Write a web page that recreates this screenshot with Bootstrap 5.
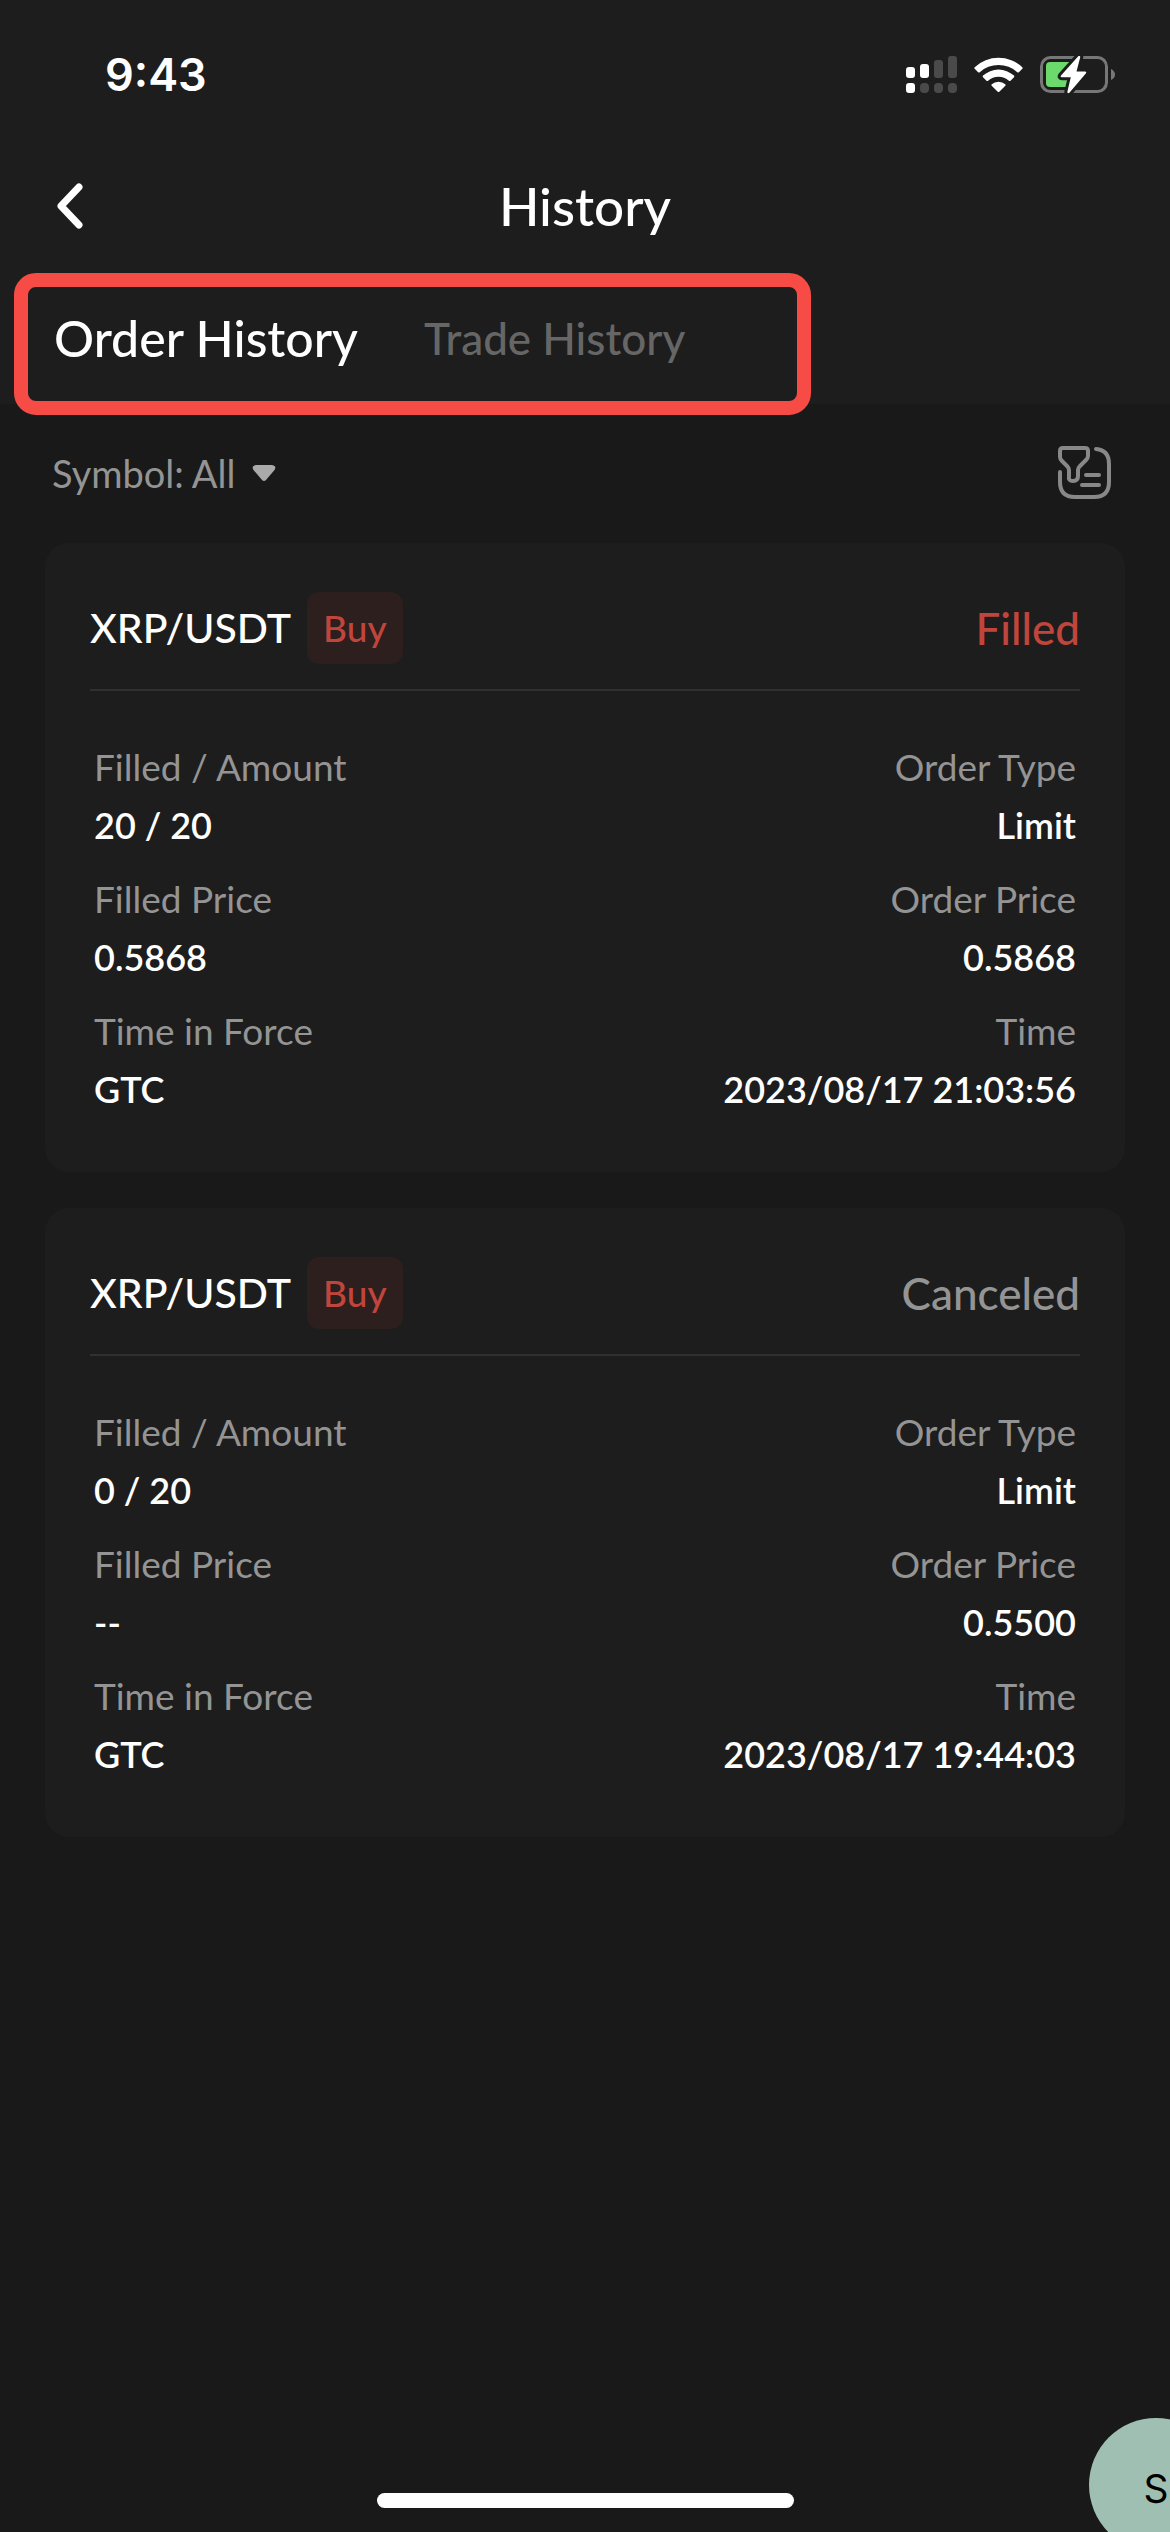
<!DOCTYPE html>
<html lang="en">
<head>
<meta charset="utf-8">
<meta name="viewport" content="width=device-width, initial-scale=1">
<title>History</title>
<link href="https://cdn.jsdelivr.net/npm/bootstrap@5.3.0/dist/css/bootstrap.min.css" rel="stylesheet">
<style>
:root { --page: #191919; --panel: #1d1d1d; --line: #303030; --muted: #949494; --dim: #666; --buy: #c0453c; }
body { background: var(--page); color: #fff; font-family: Lato, "Noto Sans", sans-serif; font-size: 37px; line-height: 58px; font-weight: 500; overflow-x: hidden; }
svg { display: block; flex: none; }
.top-panel { background: var(--panel); }
.status-bar { height: 150px; padding: 0 54px 0 105px; font-family: Inter, sans-serif; font-size: 45px; font-weight: 600; }
.title-bar { height: 114px; padding: 0 56px 2px; }
.title-bar h1 { font-size: 53px; line-height: 64px; font-weight: 500; }
.side-slot { width: 64px; }
.tab-row { height: 140px; padding: 8px 54px 0; gap: 66px; }
.tab-row .nav-link { font-size: 44px; line-height: 60px; color: var(--dim); padding: 0; }
.tab-row .nav-link.active { font-size: 50px; color: #fff; }
.tab-frame { left: 14px; top: 9px; width: 797px; height: 142px; border: 14px solid #f74b46; border-radius: 22px; pointer-events: none; }
.filter-bar { height: 139px; padding: 0 59px 2px 52px; font-size: 38px; color: var(--muted); font-weight: 400; }
.filter-bar select { appearance: none; background: none; border: 0; padding: 0; margin-right: 16px; color: inherit; font: inherit; }
.order-list { padding: 0 45px; gap: 36px; }
.order-card { background: var(--panel); border: 0; border-radius: 24px; color: #fff; padding: 0 45px 54px; }
.order-head { height: 148px; padding-top: 24px; border-bottom: 2px solid var(--line); }
.pair-name { font-size: 41px; }
.side-tag { background: #2c1f1d; color: var(--buy); border-radius: 12px; line-height: 72px; padding: 0 16px; }
.order-state { font-size: 44px; }
.state-filled { color: var(--buy); }
.state-canceled { color: var(--muted); }
.order-data { padding: 47px 4px 0; margin: 0; row-gap: 16px; }
.order-data dt { color: var(--muted); font-weight: 400; }
.order-data dd { margin: 0; font-size: 36px; font-weight: 600; }
.home-bar { width: 417px; height: 15px; border-radius: 8px; background: #fff; margin-bottom: 24px; }
.chat-bubble { right: -53px; bottom: -20px; width: 134px; height: 134px; background: #9fbfb3; color: #000; font: 400 39px/48px Inter, sans-serif; border: 0; border-radius: 50%; padding: 8px 0 0; }
</style>
</head>
<body>
<div class="d-flex flex-column min-vh-100">
  <header class="top-panel">
    <div class="status-bar d-flex align-items-center justify-content-between">
      <span>9:43</span>
      <div class="d-flex align-items-center">
        <svg class="me-3" width="52" height="38" viewBox="0 0 52 38" fill="#fff" aria-hidden="true">
          <rect y="11" width="9" height="11" rx="3"/><rect x="14" y="8" width="9" height="14" rx="3"/>
          <rect y="27" width="9" height="10" rx="3"/>
          <g fill="#4a4a4a"><rect x="28" y="4" width="9" height="18" rx="3"/><rect x="42" width="9" height="22" rx="3"/><rect x="14" y="27" width="9" height="10" rx="4"/><rect x="28" y="27" width="9" height="10" rx="4"/><rect x="42" y="27" width="9" height="10" rx="4"/></g>
        </svg>
        <svg class="me-3" width="50" height="38" viewBox="0 0 50 38" fill="#fff" aria-hidden="true">
          <path d="M.7 11.200a35 35 0 0 1 47.600 0q.8.800 0 1.600l-3.400 3.400q-.8.800-1.600 0a28 28 0 0 0-37.600 0q-.8.800-1.600 0L.7 12.800q-.8-.8 0-1.600Z"/>
          <path d="M9 19.600a23 23 0 0 1 31 0q.8.800 0 1.600l-3.500 3.500q-.8.700-1.600 0a15.500 15.500 0 0 0-20.800 0q-.8.700-1.600 0L9 21.200q-.8-.8 0-1.600Z"/>
          <path d="M17.700 28.200a10.500 10.500 0 0 1 13.600 0q.8.700 0 1.500l-6 6q-.8.800-1.600 0l-6-6q-.8-.8 0-1.500Z"/>
        </svg>
        <svg width="76" height="38" viewBox="0 0 76 38" aria-hidden="true">
          <rect x="1.500" y="1.500" width="65" height="34" rx="9" fill="none" stroke="#777" stroke-width="3"/>
          <path d="M71 13q4 2 4 5.500T71 24Z" fill="#777"/>
          <path d="M10 6H38V31H10Q6 31 6 27V10Q6 6 10 6Z" fill="#6bd96b"/>
          <path d="M38.500 0 21 19.500q-1 1.700 1 1.700h8.800L27.300 36q.5 2 2.100.8L46 17.300q.8-1.700-1-1.700h-8.500L40.300 1Q39.700-.8 38.500 0Z" fill="#fff" stroke="#1d1d1d" stroke-width="6" paint-order="stroke" stroke-linejoin="round"/>
        </svg>
      </div>
    </div>
    <div class="title-bar d-flex align-items-center justify-content-between">
      <button class="btn p-0 border-0 side-slot" type="button" aria-label="Back">
        <svg width="28" height="46" viewBox="0 0 28 46" fill="none" stroke="#fff" stroke-width="7" stroke-linecap="round" stroke-linejoin="round"><path d="M23 4 5 23l18 19"/></svg>
      </button>
      <h1 class="m-0">History</h1>
      <span class="side-slot"></span>
    </div>
    <div class="position-relative">
      <nav class="tab-row nav align-items-center">
        <button class="nav-link active bg-transparent border-0" type="button">Order History</button>
        <button class="nav-link bg-transparent border-0" type="button">Trade History</button>
      </nav>
      <div class="tab-frame position-absolute"></div>
    </div>
  </header>
  <main>
    <div class="filter-bar d-flex align-items-center justify-content-between">
      <div class="d-flex align-items-center">
        <label for="symbol" class="me-2">Symbol:</label>
        <select id="symbol"><option>All</option></select>
        <svg width="24" height="18" viewBox="0 0 24 18" fill="#aaa" aria-hidden="true"><path d="M4 1h16q5 1 2.500 5L14 16q-2 2-4 0L1.500 6Q-1 2 4 1Z"/></svg>
      </div>
      <button class="btn p-0 border-0" type="button" aria-label="Filter">
        <svg width="53" height="53" viewBox="0 0 53 53" fill="none" stroke="#888" stroke-width="4" stroke-linecap="round" stroke-linejoin="round"><path d="M5 2h22q3 0 3 3v5q0 2-2 4l-6 6q-2 2-2 4v6q0 5-5 5t-4-5v-6q0-2-2-4l-5-5q-2-2-2-4V5q0-3 3-3Z"/><path d="M2 26v10q0 15 15 15h19q15 0 15-15V18Q51 4 38 3M28 29h13M24 39h17"/></svg>
      </button>
    </div>
    <div class="order-list d-flex flex-column">
      <article class="card order-card">
        <div class="order-head d-flex align-items-center justify-content-between">
          <div class="d-flex align-items-center gap-3"><span class="pair-name">XRP/USDT</span><span class="side-tag">Buy</span></div>
          <span class="order-state state-filled">Filled</span>
        </div>
        <div class="order-data row gx-0">
          <dl class="col-6 m-0"><dt>Filled / Amount</dt><dd>20 / 20</dd></dl>
          <dl class="col-6 m-0 text-end"><dt>Order Type</dt><dd>Limit</dd></dl>
          <dl class="col-6 m-0"><dt>Filled Price</dt><dd>0.5868</dd></dl>
          <dl class="col-6 m-0 text-end"><dt>Order Price</dt><dd>0.5868</dd></dl>
          <dl class="col-6 m-0"><dt>Time in Force</dt><dd>GTC</dd></dl>
          <dl class="col-6 m-0 text-end"><dt>Time</dt><dd>2023/08/17 21:03:56</dd></dl>
        </div>
      </article>
      <article class="card order-card">
        <div class="order-head d-flex align-items-center justify-content-between">
          <div class="d-flex align-items-center gap-3"><span class="pair-name">XRP/USDT</span><span class="side-tag">Buy</span></div>
          <span class="order-state state-canceled">Canceled</span>
        </div>
        <div class="order-data row gx-0">
          <dl class="col-6 m-0"><dt>Filled / Amount</dt><dd>0 / 20</dd></dl>
          <dl class="col-6 m-0 text-end"><dt>Order Type</dt><dd>Limit</dd></dl>
          <dl class="col-6 m-0"><dt>Filled Price</dt><dd>--</dd></dl>
          <dl class="col-6 m-0 text-end"><dt>Order Price</dt><dd>0.5500</dd></dl>
          <dl class="col-6 m-0"><dt>Time in Force</dt><dd>GTC</dd></dl>
          <dl class="col-6 m-0 text-end"><dt>Time</dt><dd>2023/08/17 19:44:03</dd></dl>
        </div>
      </article>
    </div>
  </main>
  <footer class="mt-auto d-flex justify-content-center"><div class="home-bar"></div></footer>
</div>
<button class="chat-bubble position-fixed" type="button">S</button>
<script src="https://cdn.jsdelivr.net/npm/bootstrap@5.3.0/dist/js/bootstrap.bundle.min.js"></script>
</body>
</html>
